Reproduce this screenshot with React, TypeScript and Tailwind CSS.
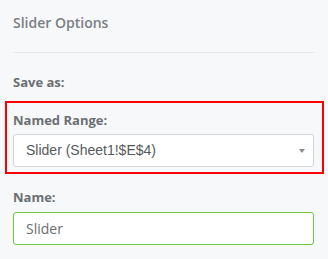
import React from 'react';

const App: React.FC = () => {
  return (
    <div
      className="w-[328px] h-[259px] bg-[#f7f8fa] overflow-hidden"
      style={{ fontFamily: '"Open Sans", "Liberation Sans", sans-serif' }}
    >
      <div className="px-[13px] pt-[13px]">
        <h2 className="text-[14px] leading-[20px] font-semibold text-[#7b7f84]">Slider Options</h2>
        <div className="mt-[19px] h-px bg-[#e8eaed]" />
        <p className="mt-[20px] text-[13px] leading-[18px] font-bold text-[#6b6f73]">Save as:</p>
      </div>

      <div className="mt-[10px] ml-[5px] mr-[4px] border-2 border-[#ff0000] pt-[8px] pb-[5px] pl-[6px] pr-[8px]">
        <label className="block text-[13px] leading-[18px] font-bold text-[#6b6f73]">Named Range:</label>
        <div className="mt-[5px] h-[33px] flex items-center justify-between bg-white border border-[#d4d6d9] rounded-[3px] pl-[12px] pr-[8px]">
          <span
            className="text-[14px] text-[#555a5e]"
            style={{ fontFamily: '"Liberation Sans", Arial, sans-serif' }}
          >
            Slider (Sheet1!$E$4)
          </span>
          <span className="w-0 h-0 border-l-[3px] border-r-[3px] border-t-[4px] border-l-transparent border-r-transparent border-t-[#888c90]" />
        </div>
      </div>

      <div className="px-[13px] pt-[14px]">
        <label className="block text-[13px] leading-[18px] font-bold text-[#6b6f73]">Name:</label>
        <div className="mt-[6px] h-[33px] flex items-center bg-white border border-[#6dc645] rounded-[3px] pl-[12px] mr-[1px]">
          <span className="text-[14px] text-[#6a6e72]">Slider</span>
        </div>
      </div>
    </div>
  );
};

export default App;
